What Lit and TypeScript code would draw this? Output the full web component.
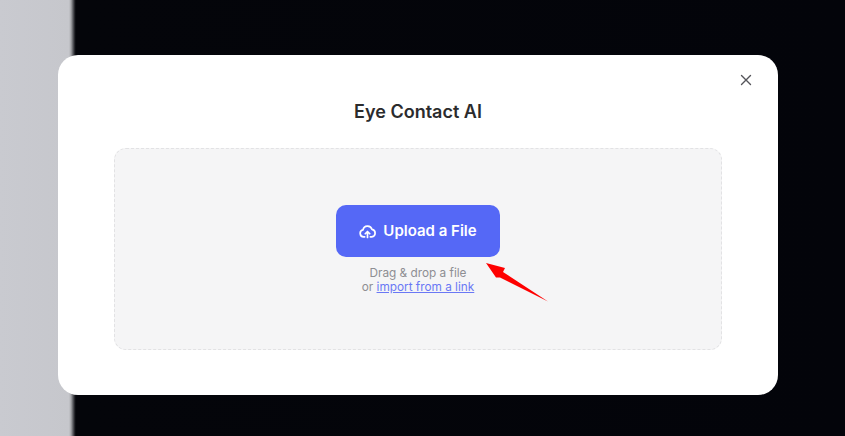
import { LitElement, html, css } from "lit";
import { customElement } from "lit/decorators.js";

@customElement("app-root")
export class AppRoot extends LitElement {
  static styles = css`
    :host {
      display: block;
      width: 845px;
      height: 436px;
      overflow: hidden;
      font-family: Inter, "Liberation Sans", sans-serif;
      background: linear-gradient(90deg, #c9cad0 0, #c6c7cc 69px, #a5a6aa 71px, #5a5b60 73px, #15161b 75px, #04050a 76px, #03040a 100%);
    }
    * { box-sizing: border-box; }
    .page {
      height: 436px;
      padding: 55px 67px 41px 58px;
    }
    .modal {
      position: relative;
      height: 340px;
      background: #fff;
      border-radius: 20px;
      padding: 44px 56px 45px;
      display: flex;
      flex-direction: column;
      align-items: stretch;
    }
    .close {
      position: absolute;
      top: 19px;
      right: 26px;
      width: 12px;
      height: 12px;
      display: block;
    }
    h1 {
      margin: 0 0 23px;
      font-size: 18px;
      line-height: 26px;
      font-weight: 600;
      color: #2b2b2d;
      text-align: center;
    }
    .drop {
      position: relative;
      flex: 1;
      background: #f5f5f6;
      border: 1px dashed #e2e2e4;
      border-radius: 12px;
      display: flex;
      flex-direction: column;
      align-items: center;
      padding-top: 56px;
    }
    .upload {
      width: 164px;
      height: 52px;
      border: 0;
      border-radius: 10px;
      background: #5568f6;
      color: #fff;
      font: 600 15px/20px Inter, "Liberation Sans", sans-serif;
      display: flex;
      align-items: center;
      justify-content: center;
      gap: 7px;
      padding: 0;
    }
    .upload svg { width: 17px; height: 17px; display: block; }
    .hint {
      margin-top: 9px;
      font-size: 11.8px;
      line-height: 14px;
      color: #8e8e93;
      text-align: center;
    }
    .hint a { color: #6a78f5; text-decoration: underline; }
    .arrow {
      position: absolute;
      left: 371px;
      top: 114px;
      width: 63px;
      height: 40px;
      display: block;
    }
  `;

  render() {
    return html`
      <div class="page">
        <div class="modal">
          <svg class="close" viewBox="0 0 12 12" fill="none" stroke="#55555a" stroke-width="1.4" stroke-linecap="round">
            <path d="M1.5 1.5l9 9M10.5 1.5l-9 9" />
          </svg>
          <h1>Eye Contact AI</h1>
          <div class="drop">
            <button class="upload">
              <svg viewBox="0 0 24 24" fill="none" stroke="#fff" stroke-width="2.4" stroke-linecap="round" stroke-linejoin="round">
                <path d="M8 19.5H6.5a5 5 0 0 1-.8-9.9A6.5 6.5 0 0 1 18.3 9a5.3 5.3 0 0 1-.3 10.5h-2" />
                <path d="M12 20.5v-8M8.8 15.2l3.2-3.2 3.2 3.2" />
              </svg>
              Upload a File
            </button>
            <div class="hint">Drag &amp; drop a file<br />or <a href="#">import from a link</a></div>
            <svg class="arrow" viewBox="0 0 63 40">
              <path d="M0 0L19 5L17 9L62 38.5L14 14.5L10 14.5Z" fill="#fe0000" />
            </svg>
          </div>
        </div>
      </div>
    `;
  }
}
